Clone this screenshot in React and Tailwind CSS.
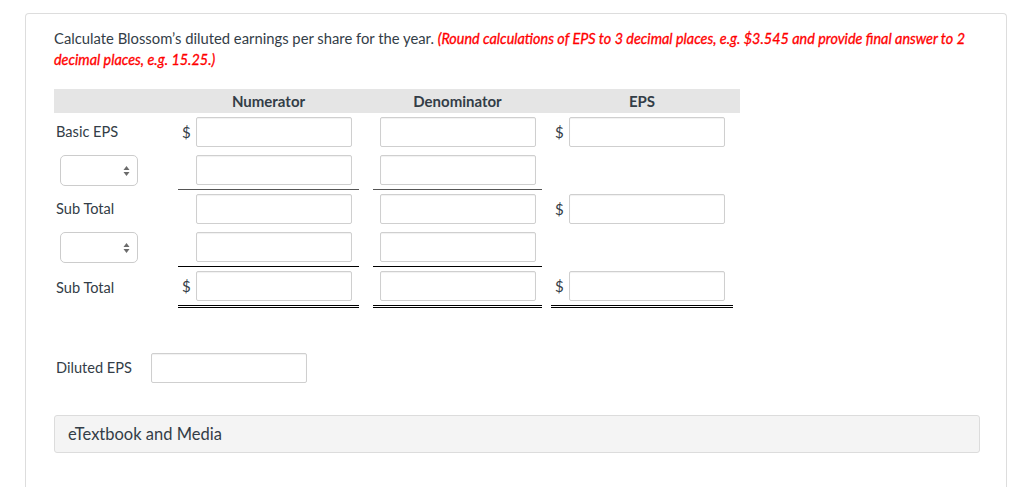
import React from 'react';

const Input = () => (
  <input
    type="text"
    className="h-[30px] w-[156px] border border-[#cfcfcf] rounded-[2px] bg-white shadow-[inset_0_1px_1px_rgba(0,0,0,0.06)] outline-none"
  />
);

const Select = () => (
  <div className="relative ml-[6px] h-[31px] w-[78px] rounded-[5px] border border-[#cccccc] bg-white">
    <svg
      className="absolute right-[7px] top-1/2 -translate-y-1/2"
      width="7"
      height="11"
      viewBox="0 0 7 11"
    >
      <path d="M3.5 0.5 L6.5 4.5 L0.5 4.5 Z" fill="#6b6b6b" />
      <path d="M3.5 10.5 L6.5 6.5 L0.5 6.5 Z" fill="#6b6b6b" />
    </svg>
  </div>
);

const Dollar = () => (
  <span className="w-[18px] pl-[4px] text-[15px] text-[#333d47]">$</span>
);

function Row({ label, select, numDollar, eps, line }) {
  // line: '' | 'gray' | 'black' | 'double'
  const lineCls =
    line === 'gray'
      ? 'border-b border-[#555555]'
      : line === 'black'
      ? 'border-b border-black'
      : line === 'double'
      ? 'border-b-[3px] border-double border-black'
      : '';

  return (
    <div className="flex items-stretch">
      <div className="flex w-[124px] items-center">
        {select ? (
          <Select />
        ) : (
          <span className="pl-[2px] text-[14.6px] text-[#333d47]">{label}</span>
        )}
      </div>
      <div className={`flex w-[181px] items-center py-[4px] ${lineCls}`}>
        {numDollar ? <Dollar /> : <span className="w-[18px]" />}
        <Input />
      </div>
      <div className={`ml-[14px] flex w-[169px] items-center justify-center py-[4px] ${lineCls}`}>
        <Input />
      </div>
      <div
        className={`ml-[9px] flex w-[182px] items-center py-[4px] ${
          line === 'double' ? 'border-b-[3px] border-double border-black' : ''
        }`}
      >
        {eps && (
          <>
            <Dollar />
            <Input />
          </>
        )}
      </div>
    </div>
  );
}

export default function App() {
  return (
    <div className="min-h-screen bg-white pt-[13px] pl-[25px] pr-[17px] font-['Lato','Open_Sans',sans-serif]">
      <div className="min-h-[480px] rounded-t-[4px] border border-b-0 border-[#dddddd] pl-[28px] pr-[26px] pt-[14px]">
        <p className="text-[14.8px] leading-[20px] text-[#333d47]">
          Calculate Blossom’s diluted earnings per share for the year.{' '}
          <span className="text-[14.4px] leading-[20px] italic text-[#ff0000] [-webkit-text-stroke:0.3px_#ff0000]">
            (Round calculations of EPS to 3 decimal places, e.g. $3.545 and provide final answer to 2
            decimal places, e.g. 15.25.)
          </span>
        </p>

        <div className="mt-[19px] w-[686px]">
          <div className="flex h-[24px] items-center bg-[#e5e5e5] text-[15px] font-bold text-[#333d47]">
            <div className="w-[124px]" />
            <div className="w-[181px] text-center">Numerator</div>
            <div className="ml-[14px] w-[169px] text-center">Denominator</div>
            <div className="ml-[9px] w-[182px] text-center">EPS</div>
          </div>

          <Row label="Basic EPS" numDollar eps />
          <Row select line="gray" />
          <Row label="Sub Total" eps />
          <Row select line="black" />
          <Row label="Sub Total" numDollar eps line="double" />
        </div>

        <div className="mt-[45px] flex items-center">
          <span className="w-[97px] pl-[2px] text-[14.6px] text-[#333d47]">Diluted EPS</span>
          <Input />
        </div>

        <div className="mt-[32px] flex h-[38px] items-center rounded-[3px] border border-[#dcdcdc] bg-[#f4f4f4] pl-[13px] text-[16.5px] text-[#333d47]">
          eTextbook and Media
        </div>
      </div>
    </div>
  );
}
